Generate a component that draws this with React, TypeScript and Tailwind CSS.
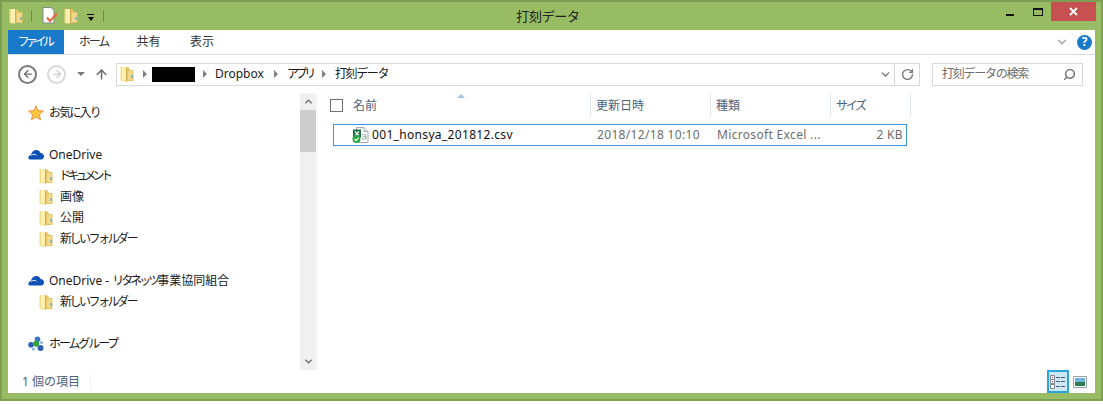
import { ChevronDown, ChevronUp, Search, RotateCw, ArrowLeft, ArrowRight, ArrowUp } from "lucide-react";

function Folder({ className = "" }: { className?: string }) {
  return (
    <svg width="14" height="16" viewBox="0 0 14 16" className={className}>
      <path d="M0.5 1 H7 V15.5 H2 L0.5 14.5 Z" fill="#f4dd8a" />
      <path d="M7 1.5 H9 L10 4 H13.5 V15 H7 Z" fill="#e6c566" />
      <path d="M2 1 H6 V14.5 H2 Z" fill="#fdf0b0" />
      <path d="M6.5 1 V15.5" stroke="#d2ae52" />
      <path d="M8 5 H12.5 V14 H8 Z" fill="#f0d98c" />
      <rect x="11.5" y="9" width="1.2" height="3" fill="#4aa3d8" />
    </svg>
  );
}

function Cloud() {
  return (
    <svg width="16" height="11" viewBox="0 0 16 11">
      <path d="M0.5 10 C0 7.5 1.5 6 3 6 C3.5 3 6 0.5 9 1 C11 1.3 12 2.5 12.5 4 C14.5 4 16 5.5 16 7.5 C16 9 15 10.5 13 10.5 H2 Z" fill="#0f52b5" />
      <path d="M3 6.5 C5 5 7 5 8.5 6.5" stroke="#fff" strokeWidth="0.9" fill="none" />
    </svg>
  );
}

function Star() {
  return (
    <svg width="16" height="16" viewBox="0 0 16 16">
      <path d="M8 .8 L10.1 5.6 L15.4 6.1 L11.4 9.6 L12.6 14.8 L8 12.1 L3.4 14.8 L4.6 9.6 L.6 6.1 L5.9 5.6 Z" fill="#fcc63d" stroke="#e7894a" strokeWidth="0.9" />
    </svg>
  );
}

function HomeGroup() {
  return (
    <svg width="16" height="16" viewBox="0 0 16 16">
      <path d="M9 3 L3 9 L12 12 Z" fill="#dbe8f5" />
      <circle cx="9.5" cy="3.2" r="2.8" fill="#3a78c4" />
      <circle cx="3" cy="8.8" r="2.8" fill="#2f5fb5" />
      <circle cx="12.5" cy="12" r="3" fill="#3062b4" />
      <circle cx="13.5" cy="6.5" r="1.6" fill="#8fb2da" />
      <circle cx="5.5" cy="13" r="1.6" fill="#8fb2da" />
      <circle cx="8.2" cy="7.8" r="3" fill="#2fa336" />
    </svg>
  );
}

function CsvIcon() {
  return (
    <svg width="17" height="17" viewBox="0 0 17 17">
      <path d="M4.5 .5 H12 L16 4.5 V15.5 H4.5 Z" fill="#fff" stroke="#a9adb0" />
      <path d="M12 .5 V4.5 H16" fill="#e4e6e7" stroke="#a9adb0" />
      <rect x="1" y="2.5" width="8" height="8" fill="#1e7145" />
      <path d="M3 4.5 L7 8.5 M7 4.5 L3 8.5" stroke="#fff" strokeWidth="1.1" />
      <circle cx="4.5" cy="12" r="4" fill="#27a744" />
      <path d="M2.6 12 L4.2 13.6 L6.6 10.6" stroke="#fff" strokeWidth="1.2" fill="none" />
      <path d="M10 8 C12 6.5 14 7.5 14 9 V12 M14 10 C12 9 10 10 10.5 11.5 C11 13 13 12.5 14 11" stroke="#7fa48d" strokeWidth="0.9" fill="none" />
    </svg>
  );
}

function Caret({ className = "" }: { className?: string }) {
  return <span className={`block w-0 h-0 border-y-[4px] border-y-transparent border-l-[4px] border-l-[#808080] ${className}`} />;
}

function SideItem({ label, icon, indent, track = "" }: { label: React.ReactNode; icon: React.ReactNode; indent?: boolean; track?: string }) {
  return (
    <div className={`h-[21px] flex items-center ${indent ? "pl-[30px] gap-[6px]" : "pl-[20px] gap-[5px]"}`}>
      <span className="w-[16px] flex justify-center">{icon}</span>
      <span className={track}>{label}</span>
    </div>
  );
}

export default function App() {
  return (
    <div
      className="w-[1103px] h-[401px] bg-[#97bc63] border-2 border-[#7e9f53] flex flex-col text-[12px] text-[#1a1a1a] overflow-hidden"
      style={{ fontFamily: '"Noto Sans", "Noto Sans CJK JP", sans-serif' }}
    >
      {/* タイトルバー */}
      <div className="h-[28px] shrink-0 grid grid-cols-[1fr_auto_1fr] items-start">
        <div className="flex items-center pl-[7px] pt-[5px]">
          <Folder />
          <span className="ml-[8px] w-px h-[12px] bg-[#6f8f48]" />
          <svg width="16" height="17" viewBox="0 0 16 17" className="ml-[10px]">
            <path d="M1 .5 H9 L12 3.5 V16 H1 Z" fill="#fff" stroke="#888" />
            <path d="M5 10.5 L8 14 L15 6.5" stroke="#e8663d" strokeWidth="2" fill="none" />
          </svg>
          <Folder className="ml-[6px]" />
          <span className="ml-[9px] flex flex-col items-center gap-[2px] mt-[3px]">
            <span className="block w-[7px] h-px bg-black" />
            <span className="block w-0 h-0 border-x-[3.5px] border-x-transparent border-t-[4px] border-t-black" />
          </span>
          <span className="w-px h-[12px] bg-[#6f8f48] ml-[9px]" />
        </div>
        <div className="pt-[5px] pr-[7px] text-[13px] tracking-[-0.3px] text-[#222] leading-[18px]">打刻データ</div>
        <div className="flex justify-end items-start pr-[5px]">
          <div className="w-[26px] h-[19px] flex items-center justify-center pt-[6px] pr-[4px]">
            <span className="w-[8px] h-[2px] bg-[#111]" />
          </div>
          <div className="w-[26px] h-[19px] flex items-center justify-center">
            <span className="w-[10px] h-[8px] border border-[#111] border-t-2" />
          </div>
          <div className="w-[45px] h-[19px] bg-[#c75050] flex items-center justify-center">
            <svg width="9" height="9" viewBox="0 0 9 9">
              <path d="M1 1 L8 8 M8 1 L1 8" stroke="#fff" strokeWidth="1.8" />
            </svg>
          </div>
        </div>
      </div>

      {/* 本体 */}
      <div className="flex-1 mx-[6px] mb-[6px] bg-white flex flex-col min-h-0">
        {/* リボンタブ */}
        <div className="h-[25px] shrink-0 flex items-stretch border-b border-[#dadbdc]">
          <div className="w-[56px] bg-[#1979ca] text-white flex items-center justify-center tracking-[-3.5px] pr-[3px]">ファイル</div>
          <div className="w-[59px] flex items-center justify-center text-[#333] tracking-[-2px]">ホーム</div>
          <div className="w-[51px] flex items-center justify-center text-[#333]">共有</div>
          <div className="w-[56px] flex items-center justify-center text-[#333]">表示</div>
          <div className="flex-1 flex items-center justify-end gap-[8px] pr-[3px]">
            <ChevronDown size={14} strokeWidth={2.5} className="text-[#a8a8a8]" />
            <span className="w-[15px] h-[15px] rounded-full bg-[#1979ca] text-white text-[12px] font-bold flex items-center justify-center">?</span>
          </div>
        </div>

        {/* アドレスバー */}
        <div className="h-[38px] shrink-0 flex items-center pl-[10px] pr-[11px]">
          <span className="w-[19px] h-[19px] rounded-full border-2 border-[#7a7a7a] flex items-center justify-center">
            <ArrowLeft size={12} strokeWidth={2.5} className="text-[#6f6f6f]" />
          </span>
          <span className="w-[19px] h-[19px] ml-[10px] rounded-full border-2 border-[#d9d9d9] flex items-center justify-center">
            <ArrowRight size={12} strokeWidth={2.5} className="text-[#d0d0d0]" />
          </span>
          <span className="ml-[11px] w-0 h-0 border-x-[4px] border-x-transparent border-t-[4px] border-t-[#7a7a7a]" />
          <ArrowUp size={15} strokeWidth={2.5} className="ml-[9px] text-[#707070]" />
          <div className="ml-[7px] w-[804px] h-[23px] border border-[#d9d9d9] flex items-center">
            <Folder className="ml-[3px]" />
            <Caret className="ml-[9px]" />
            <span className="ml-[5px] w-[43px] h-[15px] bg-black" />
            <Caret className="ml-[8px]" />
            <span className="ml-[8px]">Dropbox</span>
            <Caret className="ml-[10px]" />
            <span className="ml-[9px] tracking-[-3.3px]">アプリ</span>
            <Caret className="ml-[9px]" />
            <span className="ml-[9px] tracking-[-1.4px]">打刻データ</span>
            <div className="ml-auto flex h-full items-center">
              <ChevronDown size={13} strokeWidth={2.5} className="text-[#707070] mr-[2px]" />
              <span className="w-[25px] h-full border-l border-[#d9d9d9] flex items-center justify-center">
                <RotateCw size={13} strokeWidth={2.5} className="text-[#777]" />
              </span>
            </div>
          </div>
          <div className="ml-[12px] w-[151px] h-[23px] border border-[#d9d9d9] flex items-center justify-between pl-[9px] pr-[6px] text-[#6d6d6d]">
            <span className="tracking-[-1.25px]">打刻データの検索</span>
            <Search size={13} strokeWidth={2.5} className="text-[#666] -scale-x-100" />
          </div>
        </div>

        {/* メイン */}
        <div className="flex-1 flex min-h-0">
          <div className="w-[292px] pt-[9px] shrink-0">
            <SideItem label="お気に入り" icon={<Star />} track="tracking-[-1.8px]" />
            <div className="h-[21px]" />
            <SideItem label="OneDrive" icon={<Cloud />} />
            <SideItem label="ドキュメント" icon={<Folder />} indent track="tracking-[-3.6px] -ml-[1px]" />
            <SideItem label="画像" icon={<Folder />} indent />
            <SideItem label="公開" icon={<Folder />} indent />
            <SideItem label="新しいフォルダー" icon={<Folder />} indent track="tracking-[-2.5px]" />
            <div className="h-[21px]" />
            <SideItem
              label={<>OneDrive - <span className="tracking-[-3px]">リタネッツ</span>事業協同組合</>}
              icon={<Cloud />}
            />
            <SideItem label="新しいフォルダー" icon={<Folder />} indent track="tracking-[-2.5px]" />
            <div className="h-[21px]" />
            <SideItem label="ホームグループ" icon={<HomeGroup />} track="tracking-[-2.1px]" />
          </div>
          <div className="w-[16px] shrink-0 bg-[#f0f0f0] flex flex-col justify-between">
            <div>
              <div className="h-[17px] flex items-center justify-center">
                <ChevronUp size={11} strokeWidth={3} className="text-[#606060]" />
              </div>
              <div className="h-[42px] bg-[#cdcdcd]" />
            </div>
            <div className="h-[17px] flex items-center justify-center">
              <ChevronDown size={11} strokeWidth={3} className="text-[#606060]" />
            </div>
          </div>
          <div className="flex-1 ml-[1px] border-l border-[#f3f3f3] pl-[12px] min-w-0">
            <div className="relative h-[24px] flex items-stretch text-[#4c607a] pt-[1px]">
              <div className="w-[261px] flex items-center pl-[0px] border-r border-[#e3e8ee]">
                <span className="w-[13px] h-[13px] border border-[#707070]" />
                <span className="ml-[10px]">名前</span>
              </div>
              <span className="absolute left-[127px] top-[1px] w-0 h-0 border-x-[4px] border-x-transparent border-b-[4px] border-b-[#a9c3dc]" />
              <div className="w-[120px] flex items-center pl-[5px] border-r border-[#e3e8ee]">更新日時</div>
              <div className="w-[120px] flex items-center pl-[5px] border-r border-[#e3e8ee]">種類</div>
              <div className="w-[80px] flex items-center pl-[5px] border-r border-[#e3e8ee] tracking-[-2.3px]">サイズ</div>
            </div>
            <div className="mt-[7px] ml-[3px] w-[574px] h-[22px] border border-[#3d94e6] flex items-center tracking-[0.33px]">
              <span className="ml-[18px]"><CsvIcon /></span>
              <span className="ml-[3px] w-[225px] text-[#111]">001_honsya_201812.csv</span>
              <span className="w-[120px] text-[#6d6d6d]">2018/12/18 10:10</span>
              <span className="w-[118px] text-[#6d6d6d]">Microsoft Excel ...</span>
              <span className="w-[68px] text-right text-[#6d6d6d]">2 KB</span>
            </div>
          </div>
        </div>

        {/* ステータスバー */}
        <div className="h-[23px] shrink-0 flex items-center pl-[14px] pr-[8px] text-[#4c607a]">
          <span>1 個の項目</span>
          <span className="ml-[10px] w-px h-[14px] bg-[#eeeeee]" />
          <div className="ml-auto flex items-center gap-[4px]">
            <span className="w-[22px] h-[23px] bg-[#cce8f7] border-2 border-[#2ba3e0] flex items-center justify-center">
              <svg width="16" height="14" viewBox="0 0 16 14">
                <path d="M0.5 0.5 H4.5 V4.5 H0.5 Z M0.5 4.5 H4.5 V8.5 H0.5 Z M0.5 9.5 H4.5 V13.5 H0.5 Z" fill="#fff" stroke="#7d8894" />
                <path d="M2 2 H3 V3 H2 Z M2 6 H3 V7 H2 Z" fill="#c03b3b" />
                <path d="M6 2.5 H10 M11 2.5 H15 M6 6.5 H10 M11 6.5 H15 M6 11.5 H10 M11 11.5 H15" stroke="#4f5e6e" strokeWidth="1.2" />
              </svg>
            </span>
            <svg width="14" height="12" viewBox="0 0 14 12">
              <rect x="0.5" y="0.5" width="13" height="11" fill="#fff" stroke="#9aa5b0" />
              <rect x="2" y="2" width="10" height="4" fill="#6fb4de" />
              <rect x="2" y="6" width="10" height="4" fill="#2f7d4f" />
            </svg>
          </div>
        </div>
      </div>
    </div>
  );
}
